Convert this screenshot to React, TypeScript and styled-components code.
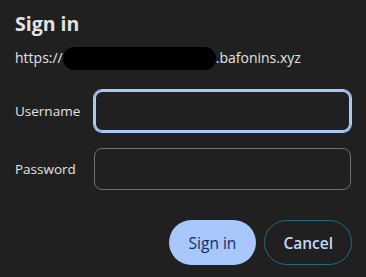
import { createGlobalStyle, styled } from "styled-components";

const GlobalStyle = createGlobalStyle`
  html, body {
    margin: 0;
    padding: 0;
    background: #202020;
  }
  body {
    font-family: "Open Sans", "Noto Sans", sans-serif;
    color: #e3e3e3;
  }
`;

// components START =======================================
const Dialog = styled.div`
  width: 366px;
  height: 277px;
  box-sizing: border-box;
  padding: 12px 14px 0 15px;
  display: flex;
  flex-direction: column;
`;

const Title = styled.h1`
  margin: 0;
  font-size: 19.5px;
  font-weight: 700;
  line-height: 24px;
  color: #e3e3e3;
`;

const Origin = styled.div`
  margin-top: 10px;
  display: flex;
  align-items: center;
  font-size: 14px;
  line-height: 24px;
  color: #e3e3e3;
`;

const Redacted = styled.span`
  display: inline-block;
  width: 153px;
  height: 23px;
  background: #000;
  border-radius: 12px;
`;

const Form = styled.div`
  margin-top: 20px;
  display: grid;
  grid-template-columns: 79px 257px;
  row-gap: 16px;
  align-items: center;
`;

const Label = styled.label`
  font-size: 13.5px;
  color: #e3e3e3;
`;

const Field = styled.input<{ $focused?: boolean }>`
  box-sizing: border-box;
  width: 257px;
  height: 42px;
  background: transparent;
  border: ${(p) => (p.$focused ? "2px solid #a8c7fa" : "1px solid #6f6f6f")};
  box-shadow: ${(p) => (p.$focused ? "0 0 0 1px #a8c7fa" : "none")};
  border-radius: 8px;
  outline: none;
  color: #e3e3e3;
  padding: 0 12px;
  font: inherit;
`;

const Actions = styled.div`
  margin-top: 30px;
  display: flex;
  justify-content: flex-end;
  gap: 8px;
`;

const Button = styled.button<{ $primary?: boolean }>`
  box-sizing: border-box;
  height: 45px;
  padding: 0 ${(p) => (p.$primary ? "20px" : "18px")};
  border-radius: 23px;
  font-family: inherit;
  font-size: 15.5px;
  font-weight: ${(p) => (p.$primary ? 500 : 600)};
  background: ${(p) => (p.$primary ? "#a8c7fa" : "transparent")};
  color: ${(p) => (p.$primary ? "#0a2f6a" : "#c4d8f8")};
  border: ${(p) => (p.$primary ? "none" : "1.5px solid #1f6c85")};
  cursor: pointer;
`;
// components END =========================================

export default function App() {
  return (
    <>
      <GlobalStyle />
      <Dialog>
        <Title>Sign in</Title>
        <Origin>
          https://
          <Redacted />
          .bafonins.xyz
        </Origin>
        <Form>
          <Label>Username</Label>
          <Field $focused />
          <Label>Password</Label>
          <Field type="password" />
        </Form>
        <Actions>
          <Button $primary>Sign in</Button>
          <Button>Cancel</Button>
        </Actions>
      </Dialog>
    </>
  );
}
